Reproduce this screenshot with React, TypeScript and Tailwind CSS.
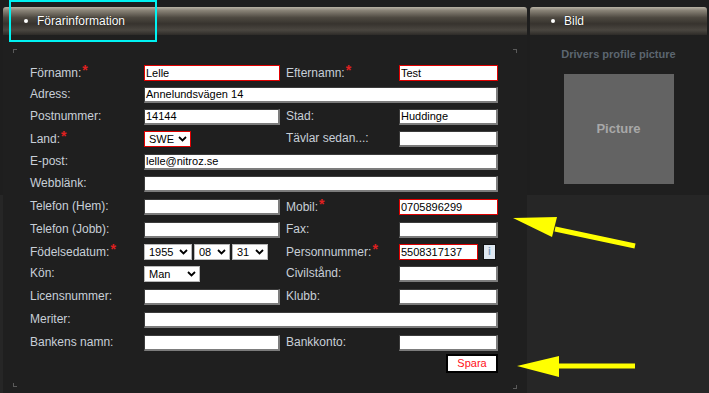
import type { ReactNode } from "react";

type Field =
  | { kind: "input"; value?: string; w: number; req?: boolean }
  | { kind: "select"; value: string; w: number; req?: boolean }
  | { kind: "info" };

type Row = {
  label: string;
  h: string;
  req?: boolean;
  left: Field[];
  full?: boolean;
  label2?: string;
  req2?: boolean;
  right?: Field[];
};

const rows: Row[] = [
  {
    label: "Förnamn:",
    h: "h-[22px]",
    req: true,
    left: [{ kind: "input", value: "Lelle", w: 136, req: true }],
    label2: "Efternamn:",
    req2: true,
    right: [{ kind: "input", value: "Test", w: 99, req: true }],
  },
  { label: "Adress:", h: "h-[22px]", full: true, left: [{ kind: "input", value: "Annelundsvägen 14", w: 354 }] },
  {
    label: "Postnummer:",
    h: "h-[22px]",
    left: [{ kind: "input", value: "14144", w: 136 }],
    label2: "Stad:",
    right: [{ kind: "input", value: "Huddinge", w: 99 }],
  },
  {
    label: "Land:",
    h: "h-[23px]",
    req: true,
    left: [{ kind: "select", value: "SWE", w: 47, req: true }],
    label2: "Tävlar sedan...:",
    right: [{ kind: "input", w: 99 }],
  },
  { label: "E-post:", h: "h-[22px]", full: true, left: [{ kind: "input", value: "lelle@nitroz.se", w: 354 }] },
  { label: "Webblänk:", h: "h-[23px]", full: true, left: [{ kind: "input", w: 354 }] },
  {
    label: "Telefon (Hem):",
    h: "h-[23px]",
    left: [{ kind: "input", w: 136 }],
    label2: "Mobil:",
    req2: true,
    right: [{ kind: "input", value: "0705896299", w: 99, req: true }],
  },
  {
    label: "Telefon (Jobb):",
    h: "h-[22px]",
    left: [{ kind: "input", w: 136 }],
    label2: "Fax:",
    right: [{ kind: "input", w: 99 }],
  },
  {
    label: "Födelsedatum:",
    h: "h-[22px]",
    req: true,
    left: [
      { kind: "select", value: "1955", w: 48 },
      { kind: "select", value: "08", w: 36 },
      { kind: "select", value: "31", w: 36 },
    ],
    label2: "Personnummer:",
    req2: true,
    right: [{ kind: "input", value: "5508317137", w: 79, req: true }, { kind: "info" }],
  },
  {
    label: "Kön:",
    h: "h-[23px]",
    left: [{ kind: "select", value: "Man", w: 56 }],
    label2: "Civilstånd:",
    right: [{ kind: "input", w: 99 }],
  },
  {
    label: "Licensnummer:",
    h: "h-[23px]",
    left: [{ kind: "input", w: 136 }],
    label2: "Klubb:",
    right: [{ kind: "input", w: 99 }],
  },
  { label: "Meriter:", h: "h-[23px]", full: true, left: [{ kind: "input", w: 354 }] },
  {
    label: "Bankens namn:",
    h: "h-[22px]",
    left: [{ kind: "input", w: 136 }],
    label2: "Bankkonto:",
    right: [{ kind: "input", w: 99 }],
  },
];

function Chevron() {
  return (
    <svg width="9" height="6" viewBox="0 0 9 6" className="shrink-0">
      <path d="M1 1 L4.5 4.5 L8 1" fill="none" stroke="#000" strokeWidth="1.8" />
    </svg>
  );
}

function Control({ f }: { f: Field }) {
  if (f.kind === "info") {
    return (
      <div className="ml-[5px] flex h-[16px] w-[13px] items-center justify-center border border-[#111] bg-[#dfe8f1] text-[10px] font-bold leading-none text-[#7a9cc0]">
        i
      </div>
    );
  }
  if (f.kind === "select") {
    return (
      <div
        style={{ width: f.w }}
        className={`flex h-[16px] items-center justify-between bg-white pr-[3px] pl-[4px] text-[11px] text-black ${
          f.req ? "border border-[#e00000]" : "border border-[#b8b8b8]"
        }`}
      >
        <span>{f.value}</span>
        <Chevron />
      </div>
    );
  }
  return (
    <div
      style={{ width: f.w }}
      className={`flex h-[16px] items-center bg-white pl-[1px] text-[11px] text-black ${
        f.req
          ? "border border-[#e00000]"
          : "border-t border-l border-t-[#3c3c3c] border-l-[#3c3c3c] border-r-2 border-b-2 border-r-[#7c7c7c] border-b-[#7c7c7c]"
      }`}
    >
      {f.value}
    </div>
  );
}

function Label({ text, req, w }: { text: string; req?: boolean; w: number }): ReactNode {
  return (
    <div style={{ width: w }} className="-mt-[2px] shrink-0 text-[12px] text-[#c8cfd8]">
      {text}
      {req && <span className="relative -top-[2px] ml-[1px] text-[14px] font-bold text-[#e02020]">*</span>}
    </div>
  );
}

function PanelHeader({ title }: { title: string }) {
  return (
    <div className="flex h-[28px] items-center rounded-t-[3px] bg-[linear-gradient(to_bottom,#b9b3a5_0%,#8a8478_12%,#4d4840_38%,#37332e_60%,#4a4640_82%,#2d2b28_100%)] pl-[21px] text-[12px] text-white [text-shadow:0_0_1px_#000]">
      <span className="mr-[9px] h-[4px] w-[4px] rounded-full bg-white" />
      {title}
    </div>
  );
}

export default function App() {
  return (
    <div className="relative h-[393px] w-[709px] overflow-hidden bg-[#262626] font-['Liberation_Sans',Arial,sans-serif]">
      <div className="flex h-full bg-[linear-gradient(to_bottom,#1e1e1e_0px,#1e1e1e_195px,transparent_195px)] pt-[7px] pl-[3px]">
        {/* left panel */}
        <div className="flex w-[524px] flex-col">
          <PanelHeader title="Förarinformation" />
          <div className="flex-1 bg-[#1f1f1f] pt-[11px] pl-[10px]">
            <div className="relative h-[344px] w-[504px] pt-[16px] pl-[17px]">
              <span className="absolute top-[3px] left-0 h-[4px] w-[4px] border-t border-l border-[#5a5a5a]" />
              <span className="absolute top-[3px] right-0 h-[4px] w-[4px] border-t border-r border-[#5a5a5a]" />
              <span className="absolute bottom-[3px] left-0 h-[4px] w-[4px] border-b border-l border-[#5a5a5a]" />
              <span className="absolute right-0 bottom-[1px] h-[4px] w-[4px] border-r border-b border-[#5a5a5a]" />

              {rows.map((r) => (
                <div key={r.label} className={`flex items-start pt-[3px] ${r.h}`}>
                  <div className="flex h-[16px] items-center">
                    <Label text={r.label} req={r.req} w={114} />
                  </div>
                  <div className={`flex items-center gap-[2px] ${r.full ? "" : "w-[136px]"}`}>
                    {r.left.map((f, i) => (
                      <Control key={i} f={f} />
                    ))}
                  </div>
                  {r.label2 && (
                    <>
                      <div className="ml-[6px] flex h-[16px] items-center">
                        <Label text={r.label2} req={r.req2} w={113} />
                      </div>
                      <div className="flex items-center">
                        {r.right?.map((f, i) => (
                          <Control key={i} f={f} />
                        ))}
                      </div>
                    </>
                  )}
                </div>
              ))}

              <div className="ml-[416px]">
                <button className="flex h-[19px] w-[52px] items-center justify-center border-2 border-black bg-white text-[11px] text-[#ff1020]">
                  Spara
                </button>
              </div>
            </div>
          </div>
        </div>

        {/* right panel */}
        <div className="ml-[3px] flex w-[177px] flex-col">
          <PanelHeader title="Bild" />
          <div className="flex h-[160px] flex-col items-center bg-[#1f1f1f] pt-[11px]">
            <div className="text-[11px] font-bold text-[#5c6670]">Drivers profile picture</div>
            <div className="mt-[11px] flex h-[110px] w-[110px] items-center justify-center bg-[#636363] text-[13px] font-bold text-[#a8a8a8]">
              Picture
            </div>
          </div>
        </div>
      </div>

      {/* annotations */}
      <div className="absolute top-0 left-[9px] h-[42px] w-[148px] border-2 border-[#00f2f2]" />
      <svg className="absolute top-0 left-0" width="709" height="393" viewBox="0 0 709 393">
        <line x1="555" y1="229" x2="635" y2="246" stroke="#ffff00" strokeWidth="5" />
        <polygon points="513,218 557,217 552,237" fill="#ffff00" />
        <line x1="555" y1="366" x2="635" y2="366" stroke="#ffff00" strokeWidth="5" />
        <polygon points="517,366 559,356 559,377" fill="#ffff00" />
      </svg>
    </div>
  );
}
